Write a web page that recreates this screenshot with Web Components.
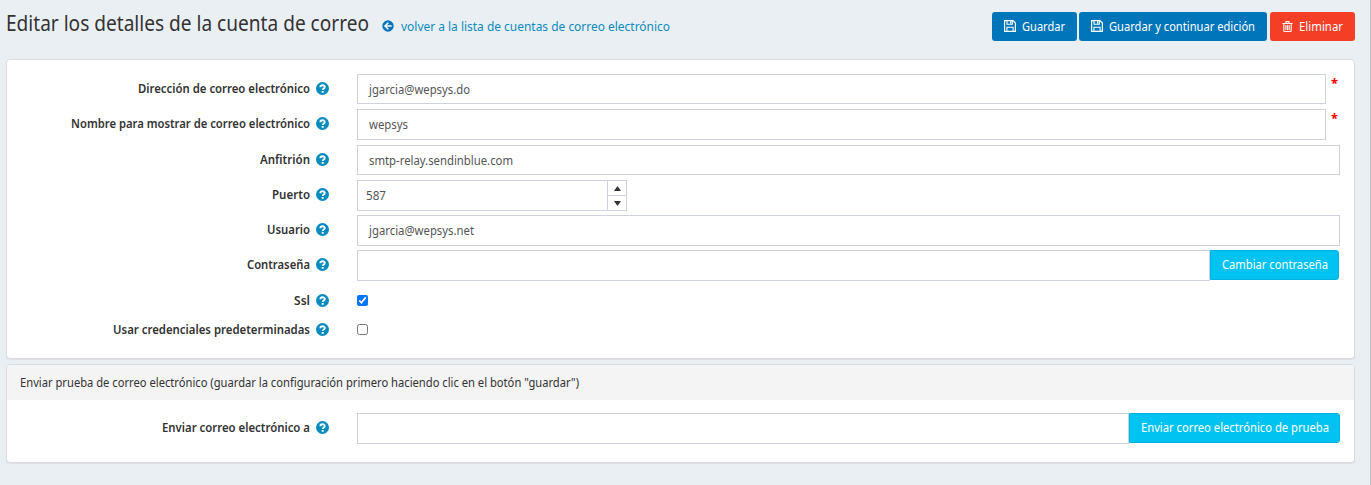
<!DOCTYPE html>
<html lang="es">
<head>
<meta charset="utf-8">
<title>Editar los detalles de la cuenta de correo</title>
<style>
html{background:#eaeff3}
body{margin:0;font:13px/18px "Noto Sans","Open Sans",sans-serif;color:#333}
</style>
</head>
<body>
<account-page></account-page>
<script>
const define=(name,html,init)=>{
  const t=document.createElement('template');t.innerHTML=html;
  customElements.define(name,class extends HTMLElement{
    connectedCallback(){
      if(this.shadowRoot)return;
      this.attachShadow({mode:'open'}).append(t.content.cloneNode(true));
      if(init)init(this,this.shadowRoot);
    }
  });
};
/* Text run condensed to a fixed measure */
define('fitted-text','<style>:host{display:block;white-space:nowrap}span{display:inline-block;white-space:nowrap;transform-origin:0 50%}</style><span><slot></slot></span>',(el,r)=>{
  const w=+el.getAttribute('w'),s=r.querySelector('span');
  s.style.transform='scaleX('+w/s.getBoundingClientRect().width+')';
  el.style.width=w+'px';
});
const icons={
 help:['.5 .5 13 13','<circle cx="7" cy="7" r="6.5" fill="#058bbd"/><path d="M4.8 5.7C4.9 3.1 9.3 3.1 9.3 5.6C9.3 7.2 7.2 7 7.2 8.5" fill="none" stroke="#fff" stroke-width="1.8"/><rect x="6.2" y="9.5" width="2" height="1.8" fill="#fff"/>'],
 back:['0 0 12 12','<circle cx="6" cy="6" r="5.7" fill="#0675bb"/><path d="M9.7 6H3.3M6.3 2.8L3.1 6L6.3 9.2" fill="none" stroke="#fff" stroke-width="1.6"/>'],
 save:['0 0 12 12','<path d="M.6 .6H8.9L11.4 3.1V11.4H.6Z" fill="none" stroke="#fff" stroke-width="1.2"/><path d="M3 .6V4.3H8.3V.6M2.9 11.4V7.2H9.1V11.4" fill="none" stroke="#fff" stroke-width="1.1"/><rect x="6" y="1.2" width="1.4" height="2.4" fill="#fff"/>'],
 trash:['0 0 12 12','<path d="M.5 2.7H11.5M4 2.5L4.5 .7H7.5L8 2.5M2 2.8V10.5Q2 11.4 2.9 11.4H9.1Q10 11.4 10 10.5V2.8M4.2 4.6V9.8M6 4.6V9.8M7.8 4.6V9.8" fill="none" stroke="#fff" stroke-width="1.2"/>']
};
define('ui-icon','<style>:host{display:block;flex:none}svg{display:block}</style><svg></svg>',(el,r)=>{
  const [v,p]=icons[el.getAttribute('name')],s=r.querySelector('svg'),z=el.getAttribute('size');
  s.setAttribute('viewBox',v);s.setAttribute('width',z);s.setAttribute('height',z);s.innerHTML=p;
});
define('action-button',`<style>
:host{display:block;flex:none}
button{box-sizing:border-box;width:100%;height:29px;display:flex;align-items:center;gap:6px;padding:0 0 1px 12px;border:0;border-radius:3px;background:#0075b9;color:#fff;font:inherit;text-align:left}
:host([kind=danger]) button{background:#f53e26;gap:6px}
:host([kind=info]) button{height:30px;background:#00c3f2;border:1px solid #00b2dd;border-radius:0 3px 3px 0;padding:0 0 2px 11px}
</style><button><slot></slot></button>`,el=>{el.style.width=el.getAttribute('width')+'px'});
define('page-header',`<style>
:host{display:flex;height:59px;padding-right:15px}
h1{margin:9px 0 0 6px;font-weight:400;font-size:21.5px;line-height:28px;width:376px}
a{display:flex;align-items:center;gap:7px;height:18px;margin-top:17px;color:#0c8bbf;text-decoration:none}
nav{margin:12px 0 0 auto;display:flex}
</style>
<h1><fitted-text w="363">Editar los detalles de la cuenta de correo</fitted-text></h1>
<a href="#"><ui-icon name="back" size="12"></ui-icon><fitted-text w="269">volver a la lista de cuentas de correo electrónico</fitted-text></a>
<nav>
<action-button width="85" style="margin-right:2px"><ui-icon name="save" size="12"></ui-icon><fitted-text w="43">Guardar</fitted-text></action-button>
<action-button width="188" style="margin-right:3px"><ui-icon name="save" size="12"></ui-icon><fitted-text w="146">Guardar y continuar edición</fitted-text></action-button>
<action-button width="85" kind="danger"><ui-icon name="trash" size="11"></ui-icon><fitted-text w="44">Eliminar</fitted-text></action-button>
</nav>`);
define('ui-panel',`<style>
:host{display:block;box-sizing:border-box;width:1349px;margin-left:6px;background:#fff;border:1px solid #dcdcde;border-radius:4px;box-shadow:0 1px 1px rgba(0,0,0,.06);overflow:hidden}
</style><slot name="heading"></slot><slot></slot>`);
define('form-row',`<style>
:host{display:flex;align-items:flex-start;padding-right:14px}
.label{width:322px;margin-right:28px;height:29px;display:flex;align-items:center;justify-content:flex-end;gap:6px;font-weight:600}
.text{padding-bottom:1px}
.field{flex:1;display:flex;align-items:flex-start}
</style><div class="label"><div class="text"><slot name="label"></slot></div><ui-icon name="help" size="13"></ui-icon></div><div class="field"><slot></slot></div>`);
define('text-field',`<style>
:host{display:block;flex:1}
div{box-sizing:border-box;height:100%;border:1px solid #ced2dc;padding:5px 11px 0;color:#555;background:#fff}
</style><div><slot></slot></div>`,el=>{el.style.height=el.getAttribute('h')+'px'});
define('required-mark',`<style>:host{display:block;width:14px;color:#f00;font:700 13px/18px "Noto Sans",sans-serif;text-indent:5px}</style>*`);
define('number-field',`<style>
:host{box-sizing:border-box;display:flex;width:270px;height:31px;border:1px solid #ced2dc;color:#555}
.value{flex:1;padding:5px 9px 0 8px}
.spin{width:18px;border-left:1px solid #ced2dc;display:grid;grid-template-rows:14px 14px;row-gap:1px;background:linear-gradient(#ced2dc,#ced2dc) 0 14px/100% 1px no-repeat}
svg{display:block;margin:auto}
</style><div class="value"><slot></slot></div><div class="spin"><svg width="7" height="5"><path d="M3.5 0L7 5H0Z" fill="#333"/></svg><svg width="7" height="5"><path d="M0 0H7L3.5 5Z" fill="#333"/></svg></div>`);
define('check-field',`<style>:host{display:block;padding-top:9px}input{display:block;width:11px;height:11px;margin:0}</style><input type="checkbox">`,(el,r)=>{r.querySelector('input').checked=el.hasAttribute('checked')});
define('account-page',`<style>
:host{display:block;box-sizing:border-box;width:1371px;height:485px;border-right:1px solid #bfc1c3;background:#eaeff3;overflow:hidden}
.main{height:300px;padding-top:14px}
.heading{height:35px;padding:8px 0 0 13px;box-sizing:border-box;background:#f4f4f4}
.test{height:99px;margin-top:5px}
</style>
<page-header></page-header>
<ui-panel class="main">
<form-row style="height:35px"><fitted-text slot="label" w="172">Dirección de correo electrónico</fitted-text><text-field h="30"><fitted-text w="101">jgarcia@wepsys.do</fitted-text></text-field><required-mark></required-mark></form-row>
<form-row style="height:36px"><fitted-text slot="label" w="239">Nombre para mostrar de correo electrónico</fitted-text><text-field h="31"><fitted-text w="39">wepsys</fitted-text></text-field><required-mark></required-mark></form-row>
<form-row style="height:35px"><fitted-text slot="label" w="50">Anfitrión</fitted-text><text-field h="30"><fitted-text w="144">smtp-relay.sendinblue.com</fitted-text></text-field></form-row>
<form-row style="height:35px"><fitted-text slot="label" w="38">Puerto</fitted-text><number-field><fitted-text w="20">587</fitted-text></number-field></form-row>
<form-row style="height:35px"><fitted-text slot="label" w="43">Usuario</fitted-text><text-field h="31"><fitted-text w="105">jgarcia@wepsys.net</fitted-text></text-field></form-row>
<form-row style="height:36px;padding-right:15px"><fitted-text slot="label" w="63">Contraseña</fitted-text><text-field h="31"></text-field><action-button kind="info" width="129"><fitted-text w="106">Cambiar contraseña</fitted-text></action-button></form-row>
<form-row style="height:29px"><fitted-text slot="label" w="16">Ssl</fitted-text><check-field checked></check-field></form-row>
<form-row style="height:30px"><fitted-text slot="label" w="197">Usar credenciales predeterminadas</fitted-text><check-field></check-field></form-row>
</ui-panel>
<ui-panel class="test">
<div class="heading" slot="heading"><fitted-text w="559">Enviar prueba de correo electrónico (guardar la configuración primero haciendo clic en el botón "guardar")</fitted-text></div>
<form-row style="margin-top:13px"><fitted-text slot="label" w="148">Enviar correo electrónico a</fitted-text><text-field h="31"></text-field><action-button kind="info" width="211"><fitted-text w="188">Enviar correo electrónico de prueba</fitted-text></action-button></form-row>
</ui-panel>`);
</script>
</body>
</html>
